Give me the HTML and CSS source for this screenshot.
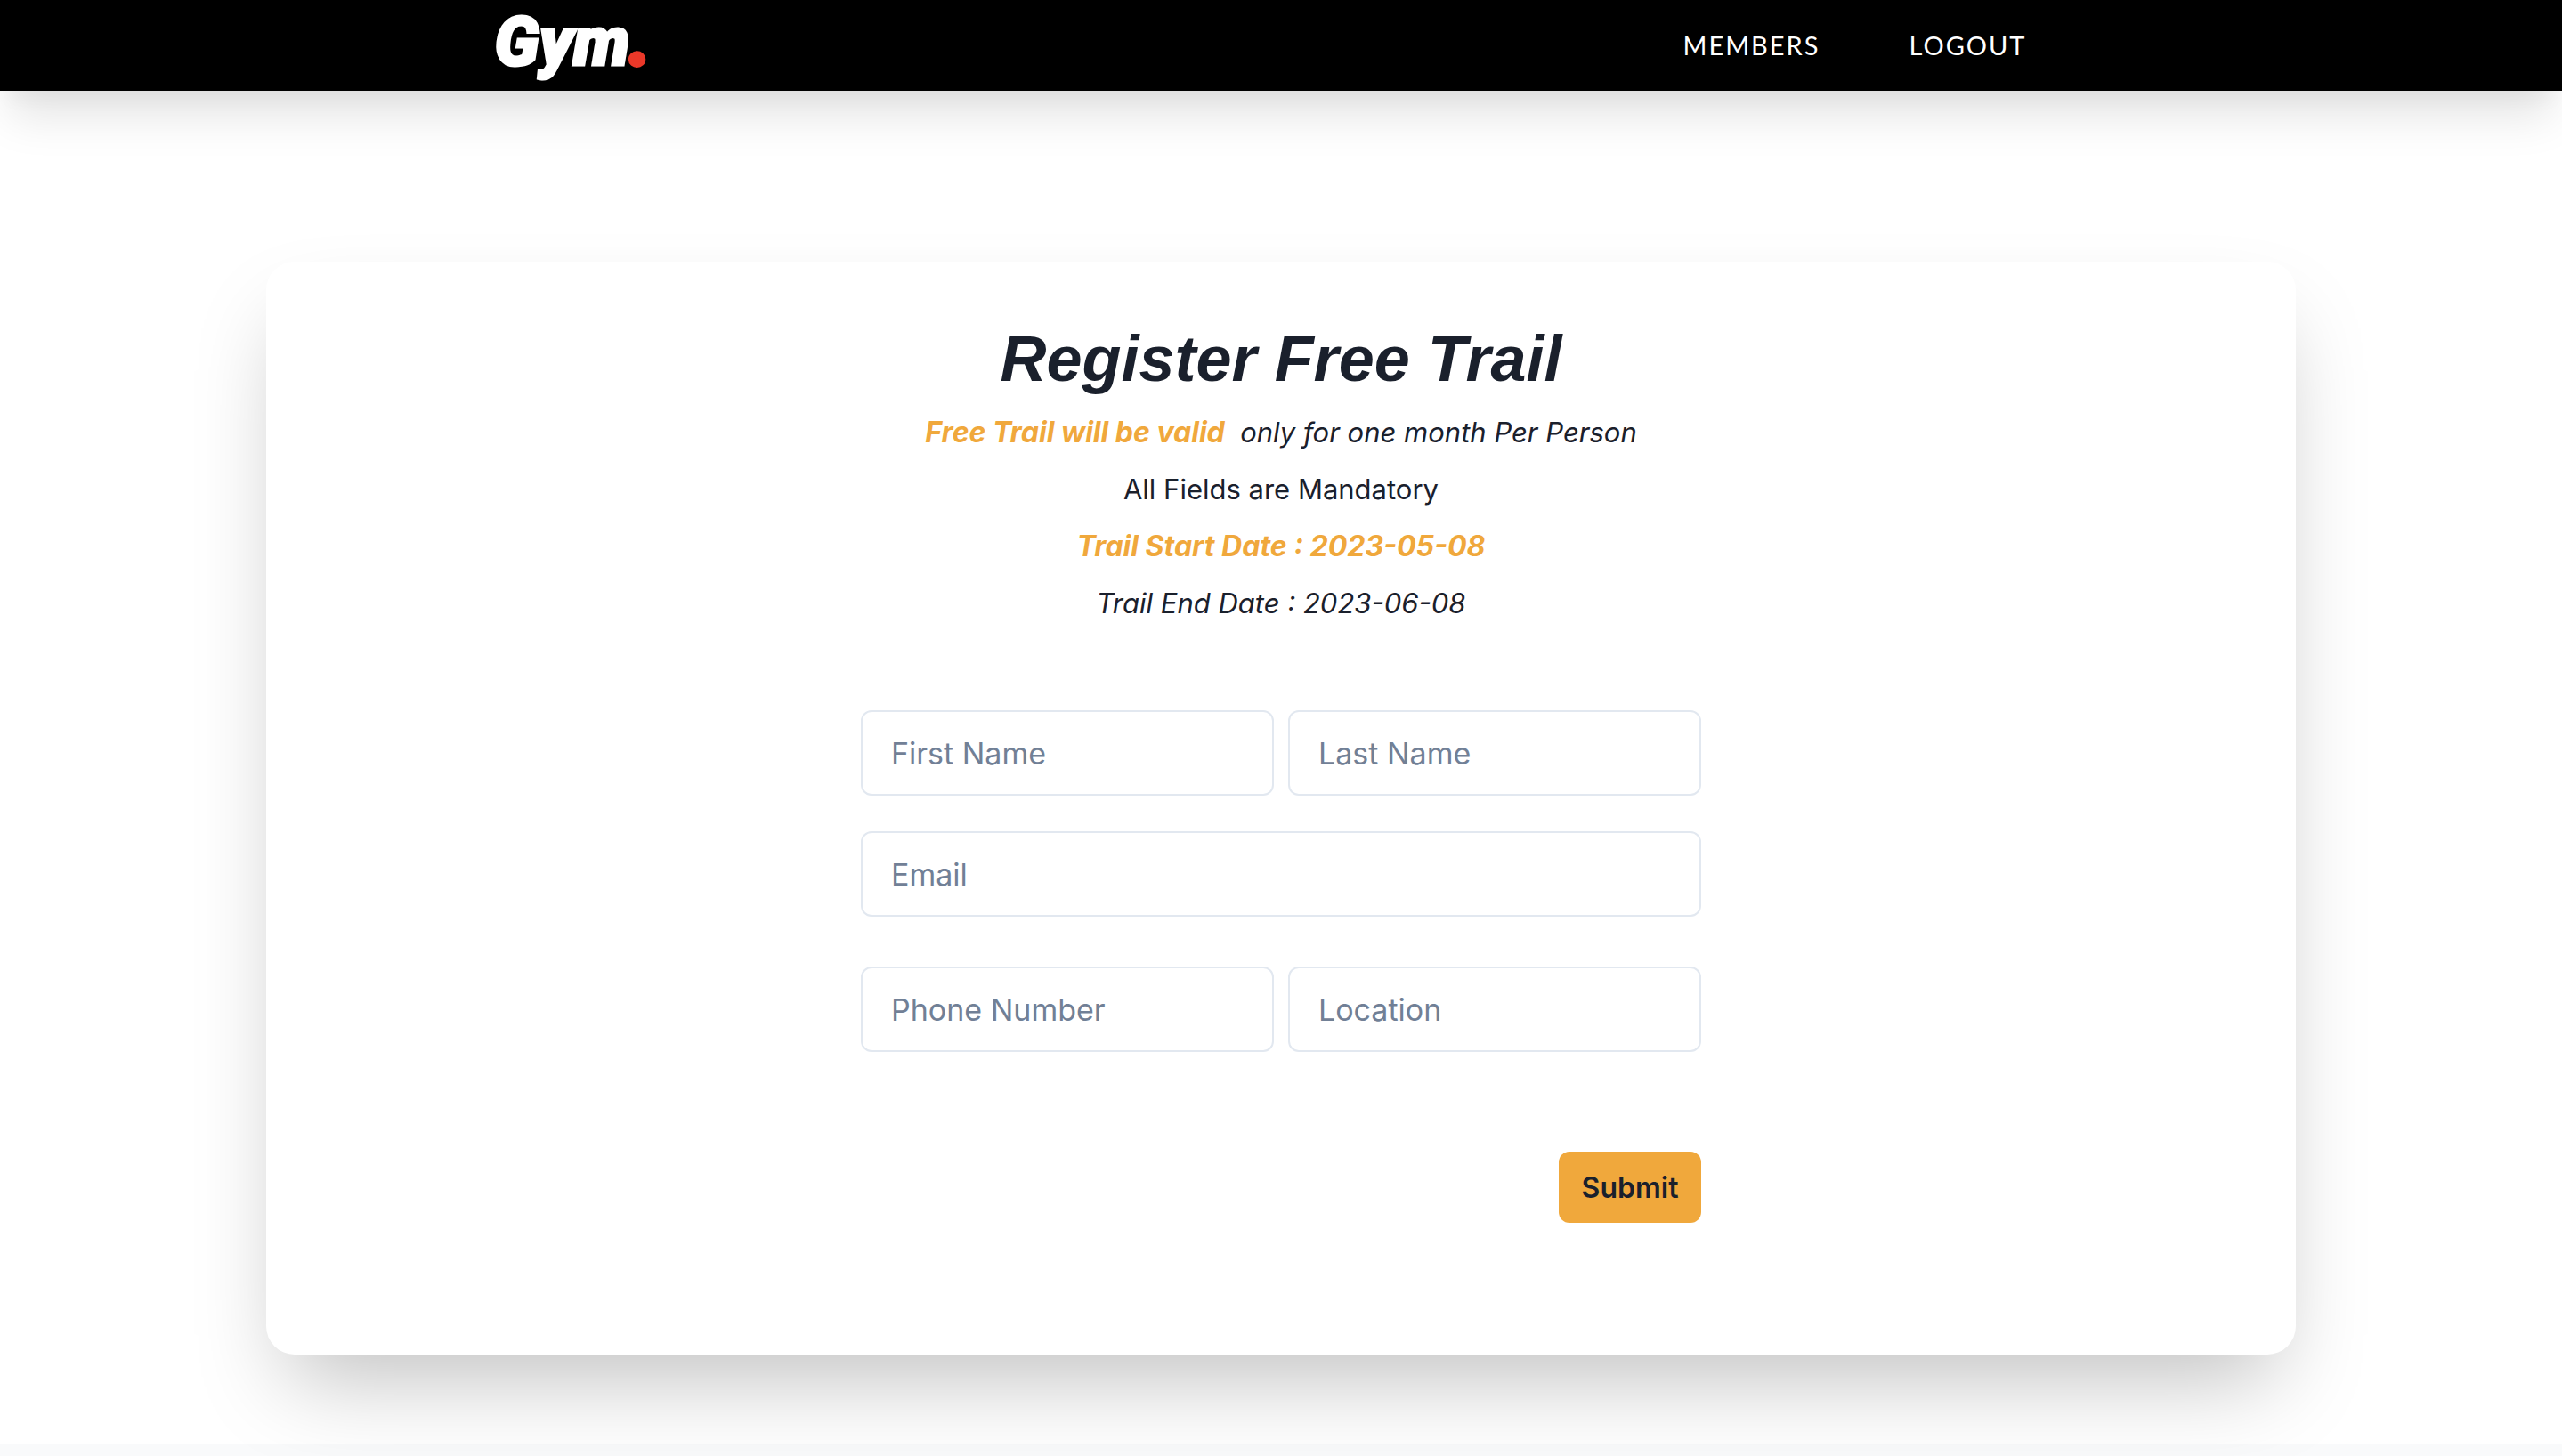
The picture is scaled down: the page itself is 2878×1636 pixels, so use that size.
FILE: index.html
```html
<!DOCTYPE html>
<html lang="en">
<head>
  <meta charset="utf-8">
  <meta name="viewport" content="width=device-width, initial-scale=1">
  <title>Gym - Register Free Trail</title>
  <link rel="stylesheet" href="styles.css">
</head>
<body>
  <header class="navbar">
    <a class="logo" href="#">Gym<span class="logo-dot">.</span></a>
    <nav class="nav-links">
      <a class="nav-link" href="#">MEMBERS</a>
      <a class="nav-link" href="#">LOGOUT</a>
    </nav>
  </header>
  <main class="page">
    <section class="card">
      <div class="intro">
        <h1 class="title">Register Free Trail</h1>
        <p class="slanted"><strong class="accent">Free Trail will be valid</strong>&nbsp; only for one month Per Person</p>
        <p>All Fields are Mandatory</p>
        <p class="slanted accent">Trail Start Date : 2023-05-08</p>
        <p class="slanted">Trail End Date : 2023-06-08</p>
      </div>
      <form class="form">
        <div class="row">
          <input class="field" type="text" placeholder="First Name" aria-label="First Name">
          <input class="field" type="text" placeholder="Last Name" aria-label="Last Name">
        </div>
        <input class="field field-email" type="email" placeholder="Email" aria-label="Email">
        <div class="row">
          <input class="field" type="tel" placeholder="Phone Number" aria-label="Phone Number">
          <input class="field" type="text" placeholder="Location" aria-label="Location">
        </div>
        <button class="submit" type="submit">Submit</button>
      </form>
    </section>
  </main>
  <footer class="footer"></footer>
</body>
</html>
```
FILE: styles.css
```css
* {
  box-sizing: border-box;
  margin: 0;
}

body {
  display: flex;
  flex-direction: column;
  min-height: 100vh;
  background: #fff;
  color: #1a202c;
  font-family: Inter, "Liberation Sans", sans-serif;
  font-size: 31px;
  line-height: 48px;
}

.navbar {
  display: flex;
  flex-shrink: 0;
  align-items: center;
  justify-content: space-between;
  height: 102px;
  padding: 0 20.9% 0 19.3%;
  background: #000;
  box-shadow: 0 40px 50px -10px rgba(0, 0, 0, 0.1), 0 20px 20px -10px rgba(0, 0, 0, 0.04);
}

.logo {
  padding-bottom: 8px;
  color: #fff;
  font-family: Roboto, sans-serif;
  font-size: 76px;
  font-style: italic;
  font-weight: 900;
  line-height: 88px;
  text-decoration: none;
  -webkit-text-stroke: 3px currentColor;
}

.logo-dot {
  color: #ea3829;
  -webkit-text-stroke: 6px currentColor;
}

.nav-links {
  display: flex;
  gap: 100px;
}

.nav-link {
  color: #fff;
  font-family: Lato, sans-serif;
  font-size: 29px;
  letter-spacing: 2px;
  text-decoration: none;
}

.page {
  flex-shrink: 0;
  padding: 192px 32px 100px;
}

.card {
  position: relative;
  display: flex;
  flex-direction: column;
  align-items: center;
  gap: 96px;
  max-width: 2280px;
  margin: 0 auto;
  padding: 66px 32px 148px;
  border-radius: 32px;
  background: #fff;
  box-shadow: 0 50px 100px -24px rgba(0, 0, 0, 0.25);
}

.intro {
  display: flex;
  flex-direction: column;
  gap: 16px;
  text-align: center;
}

.title {
  font-family: "Liberation Sans", Arial, sans-serif;
  font-size: 72px;
  font-style: italic;
  font-weight: 700;
  line-height: 86px;
}

.slanted {
  font-style: italic;
}

.accent {
  color: #f0a83c;
  font-size: 32px;
  font-weight: 700;
}

.form {
  display: flex;
  flex-direction: column;
  width: 100%;
  max-width: 944px;
}

.row {
  display: flex;
  gap: 16px;
}

.field {
  flex: 1;
  min-width: 0;
  height: 96px;
  padding: 0 32px;
  border: 2px solid #e2e8f0;
  border-radius: 12px;
  background: #fff;
  color: inherit;
  font-family: inherit;
  font-size: 34px;
}

.field::placeholder {
  color: #718096;
  opacity: 1;
}

.field-email {
  flex: none;
  margin: 40px 0 56px;
}

.submit {
  align-self: flex-end;
  width: 160px;
  height: 80px;
  margin-top: 112px;
  padding: 0;
  border: 0;
  border-radius: 12px;
  background: #f0a83c;
  color: inherit;
  font-family: inherit;
  font-size: 32px;
  font-weight: 600;
}

.footer {
  flex: 1;
  background: #f9fafb;
}
```
